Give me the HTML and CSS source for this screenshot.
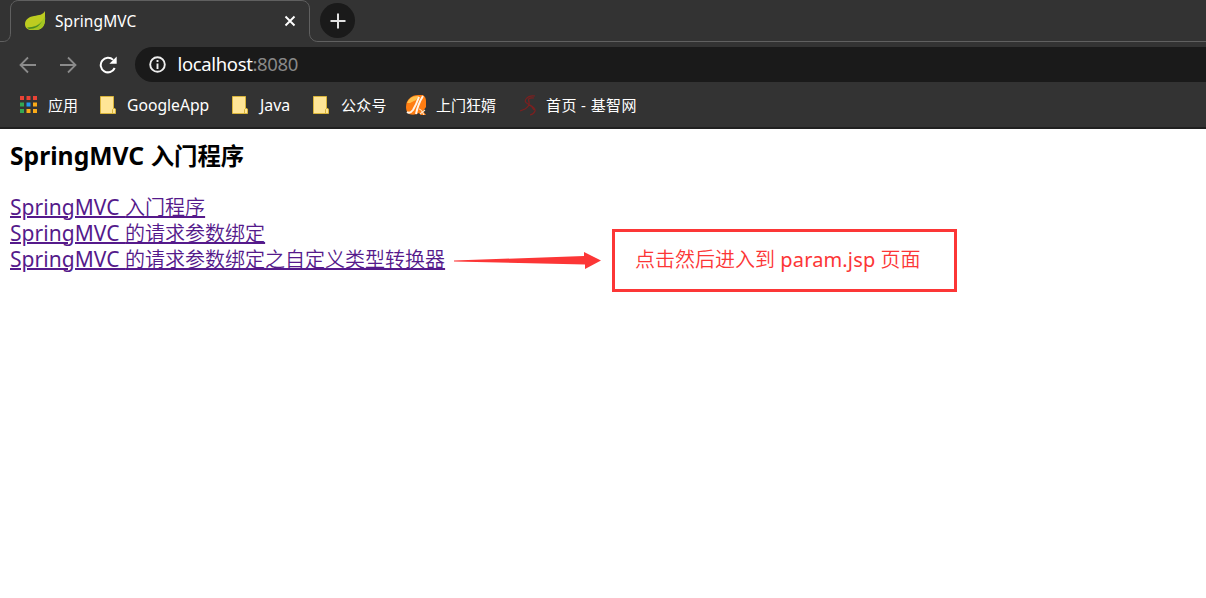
FILE: index.html
```html
<!DOCTYPE html>
<html lang="zh-CN">
<head>
<meta charset="utf-8">
<title>SpringMVC</title>
<link rel="stylesheet" href="styles.css">
</head>
<body>
<header class="browser">
  <div class="tabs">
    <svg class="tab-outline" width="1206" height="42" viewBox="0 0 1206 42"><path d="M0 41.500H3C8 41.500 10.500 38 10.500 33V9C10.500 3.500 14 .5 19 .5H301C306.500 .5 309.500 4 309.500 9V33C309.500 38 313 41.500 318 41.500H1206" fill="none" stroke="#606060"/></svg>
    <div class="tab">
      <svg class="leaf" width="22" height="20" viewBox="0 0 22 20"><path d="M20 0C18 4 14 4 9 5C3 6 0 9 0 13C0 17 3 19 7 19H12C18 18 20 14 20 9C20 5 20 2 20 0Z" fill="#bdcc20"/><path d="M3 17C9 16 16 13 20 5C21 12 18 18 12 19H7C5 19 3 18 3 17Z" fill="#a4c621"/><path d="M2 16.500C9 16 14 15 17 10C15 15 10 18 4 18Z" fill="#4c8b22"/></svg>
      <span class="tab-title">SpringMVC</span>
      <svg class="close" width="12" height="12" viewBox="0 0 12 12"><path d="M1.500 1.500L10.500 10.500M10.500 1.500L1.500 10.500" stroke="#fff" stroke-width="1.900"/></svg>
    </div>
    <div class="new-tab"><svg width="16" height="16" viewBox="0 0 16 16"><path d="M8 .5V15.500M.5 8H15.500" stroke="#e2e2e2" stroke-width="2"/></svg></div>
  </div>
  <nav class="toolbar">
    <svg width="18" height="18" viewBox="0 0 18 18"><path d="M17 9H2M9 1.500L1.500 9L9 16.500" fill="none" stroke="#8b8b8b" stroke-width="1.800"/></svg>
    <svg width="18" height="18" viewBox="0 0 18 18"><path d="M1 9H16M9 1.500L16.500 9L9 16.500" fill="none" stroke="#8b8b8b" stroke-width="1.800"/></svg>
    <svg width="18" height="18" viewBox="0 0 18 18"><path d="M15.700 12A7.300 7.300 0 1 1 14.200 3.900" fill="none" stroke="#fff" stroke-width="2"/><path d="M17.700 .5V7.800H10.400Z" fill="#fff"/></svg>
    <div class="address">
      <svg width="17" height="17" viewBox="0 0 17 17"><circle cx="8.500" cy="8.500" r="7.300" fill="none" stroke="#eee" stroke-width="1.900"/><path d="M8.500 7.500V13M8.500 4V6" stroke="#eee" stroke-width="1.900"/></svg>
      <span class="url">localhost<span class="port">:8080</span></span>
    </div>
  </nav>
  <nav class="bookmarks">
    <a class="mark apps"><svg width="18" height="18" viewBox="0 0 18 18"><path d="M0 0h4v4H0zM6.500 0h4v4h-4zM13 0h4v4h-4z" fill="#ea4335"/><path d="M0 6.500h4v4H0zM0 13h4v4H0z" fill="#34a853"/><path d="M6.500 6.500h4v4h-4z" fill="#2196f3"/><path d="M13 6.500h4v4h-4zM6.500 13h4v4h-4zM13 13h4v4h-4z" fill="#fbab18"/></svg><span>应用</span></a>
    <a class="mark google"><svg width="16" height="18" viewBox="0 0 16 18"><path d="M.5 .5H13.500V12L15.500 13V17.500H.5Z" fill="#ffe596" stroke="#d9b43a"/><path d="M12.500 17V13.500L14 12" fill="none" stroke="#d9b43a"/></svg><span>GoogleApp</span></a>
    <a class="mark java"><svg width="16" height="18" viewBox="0 0 16 18"><path d="M.5 .5H13.500V12L15.500 13V17.500H.5Z" fill="#ffe596" stroke="#d9b43a"/><path d="M12.500 17V13.500L14 12" fill="none" stroke="#d9b43a"/></svg><span>Java</span></a>
    <a class="mark public"><svg width="16" height="18" viewBox="0 0 16 18"><path d="M.5 .5H13.500V12L15.500 13V17.500H.5Z" fill="#ffe596" stroke="#d9b43a"/><path d="M12.500 17V13.500L14 12" fill="none" stroke="#d9b43a"/></svg><span>公众号</span></a>
    <a class="mark orange"><svg width="20" height="20" viewBox="0 0 20 20"><path d="M4 3Q7 0 12 0H17Q20 2 20 6V12L17 16L20 20H15L13 18Q8 21 3 19Q0 17 0 12Q0 6 4 3Z" fill="#ff7d12"/><path d="M1 8Q4 0 13 1L10 5L4 8Z" fill="#ffc04b"/><path d="M13 2Q10 10 7 15Q4 19 1 17" fill="none" stroke="#fff4e7" stroke-width="2"/><path d="M17 1Q12 9 10 19" fill="none" stroke="#fff4e7" stroke-width="2"/><path d="M13 14Q15 14 18 20M14 19L19 15" fill="none" stroke="#ffe1c2" stroke-width="1.200"/></svg><span>上门狂婿</span></a>
    <a class="mark jizhi"><svg width="18" height="21" viewBox="0 0 18 21"><path d="M16 1Q10 0 7 4Q5 7 9 9Q17 13 16 16Q15 19 11 20M15 3Q8 2 10 7Q11 11 6 14L1 16M9 9Q13 11 15 15" fill="none" stroke="#7c2020" stroke-width="1.200"/></svg><span>首页 - 基智网</span></a>
  </nav>
</header>
<main class="page">
  <h3 class="heading"><span class="latin">SpringMVC </span>入门程序</h3>
  <div class="links">
    <a class="link" href="#"><span class="latin">SpringMVC </span>入门程序</a>
    <a class="link" href="#"><span class="latin">SpringMVC </span>的请求参数绑定</a>
    <div class="link-row">
      <a class="link" href="#"><span class="latin">SpringMVC </span>的请求参数绑定之自定义类型转换器</a>
      <svg class="arrow" width="147" height="18" viewBox="0 0 147 18"><path d="M0 8.500L130 4V0L147 8.500L131 17V12.500L0 9.500Z" fill="#fc3636"/></svg>
      <div class="note">点击然后进入到 <span class="param">param.jsp</span> 页面</div>
    </div>
  </div>
</main>
</body>
</html>
```
FILE: styles.css
```css
* { box-sizing: border-box; }
body { margin: 0; width: 1206px; height: 598px; overflow: hidden; background: #fff; font-family: "Noto Sans", "Noto Sans CJK SC", sans-serif; }
svg { flex: none; display: block; }
.browser { height: 129px; background: #333; border-bottom: 2px solid #202020; color: #fff; }
.tabs { position: relative; display: flex; height: 42px; }
.tab-outline { position: absolute; left: 0; top: 0; }
.tab { display: flex; align-items: center; width: 310px; height: 42px; padding: 0 14px 0 25px; }
.tab-title { flex: 1; margin-left: 8px; font-size: 15.5px; letter-spacing: .1px; line-height: 22px; }
.new-tab { display: flex; align-items: center; justify-content: center; width: 35px; height: 35px; margin: 3px 0 0 10px; border-radius: 50%; background: #1a1a1a; }
.toolbar { display: flex; align-items: center; gap: 22px; height: 45px; padding-left: 19px; }
.address { display: flex; align-items: center; flex: 1; height: 35px; margin-left: -4px; padding-left: 14px; border-radius: 18px 0 0 18px; background: #1a1a1a; }
.url { margin: -2px 0 0 11.5px; font-size: 18.5px; line-height: 28px; letter-spacing: -.35px; }
.port { color: #888; }
.bookmarks { display: flex; align-items: center; height: 40px; padding: 0 0 4px 20px; font-size: 15px; line-height: 22px; white-space: nowrap; }
.mark { display: flex; align-items: center; gap: 11px; }
.apps { width: 80px; gap: 10px; }
.google { width: 132px; font-size: 15.7px; }
.java { width: 81px; gap: 12px; font-size: 15.9px; }
.public { width: 93px; gap: 12px; letter-spacing: .2px; }
.orange { width: 113px; gap: 10px; }
.jizhi { gap: 9px; letter-spacing: .4px; }
.page { padding: 11px 10px; }
.heading { margin: 0; font-size: 23.4px; font-weight: 700; line-height: 32px; white-space: nowrap; }
.heading .latin { font-size: 24.7px; line-height: 24px; }
.links { display: flex; flex-direction: column; align-items: flex-start; margin-top: 23px; font-size: 20px; line-height: 26px; font-weight: 350; white-space: nowrap; }
.links .latin, .param { font-weight: 400; }
.links .latin { font-size: 21px; letter-spacing: .05px; line-height: 20px; }
.link { color: #551a8b; text-decoration: underline; text-decoration-thickness: 2px; text-underline-offset: 1px; }
.link-row { display: flex; align-items: center; height: 26px; }
.arrow { margin: 2px 0 0 9px; }
.param { letter-spacing: .15px; }
.note { width: 345px; height: 63px; margin: 1px 0 0 11px; padding: 15px 20px; border: 3px solid #fc3636; color: #fc3636; }
```
